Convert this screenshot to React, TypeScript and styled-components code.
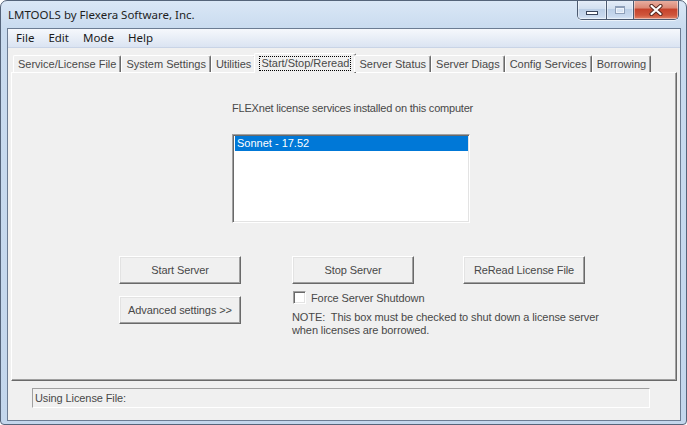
import React from 'react';
import styled, { createGlobalStyle } from 'styled-components';

const Global = createGlobalStyle`
  html, body { margin: 0; padding: 0; background: #ffffff; }
  body { font-family: "Liberation Sans", Arial, sans-serif; }
  * { box-sizing: border-box; }
`;

const TEXT = '#484848';

const Window = styled.div`
  width: 687px;
  height: 425px;
  border: 1px solid #55647a;
  border-radius: 7px 7px 4px 4px;
  background: linear-gradient(to bottom, #dae7f6 0px, #c9dbef 28px, #c3d6ec 100%);
  display: flex;
  flex-direction: column;
  padding: 0 5px 3px 6px;
  overflow: hidden;
`;

const TitleBar = styled.div`
  height: 27px;
  flex: none;
  display: flex;
  align-items: flex-start;
  justify-content: space-between;
`;

const TitleText = styled.div`
  margin: 6px 0 0 1px;
  font-family: "Noto Sans", "Open Sans", sans-serif;
  font-size: 11.5px;
  line-height: 16px;
  color: #1e1e1e;
`;

const CaptionGroup = styled.div`
  display: flex;
  margin: -1px 2px 0 0;
  height: 20px;
  border: 1px solid #4c5a70;
  border-top: none;
  border-radius: 0 0 5px 5px;
  overflow: hidden;
  box-shadow: 0 1px 0 rgba(255, 255, 255, 0.6);
`;

const CaptionButton = styled.div<{ $w: number; $close?: boolean }>`
  width: ${p => p.$w}px;
  height: 19px;
  display: flex;
  align-items: center;
  justify-content: center;
  border-left: ${p => (p.$close ? '1px solid #4c5a70' : 'none')};
  & + & { border-left: 1px solid #4c5a70; }
  background: ${p =>
    p.$close
      ? 'linear-gradient(to bottom, #eab3a6 0%, #dc8a77 40%, #c6432c 50%, #cf563c 80%, #e2866a 100%)'
      : 'linear-gradient(to bottom, #e6eef8 0%, #d3e0f0 45%, #bccfe6 50%, #c8d9ee 85%, #d9e6f5 100%)'};
  box-shadow: inset 0 0 0 1px rgba(255, 255, 255, 0.45);
`;

const MinGlyph = styled.div`
  width: 12px;
  height: 4px;
  margin-top: 6px;
  background: #ffffff;
  border: 1px solid #39445a;
`;

const MaxGlyph = styled.div`
  width: 10px;
  height: 8px;
  border: 1px solid #8e9fb8;
  border-top-width: 2px;
  background: #d8e4f3;
  box-shadow: inset 0 0 0 1px #eef3fa;
`;

const Client = styled.div`
  flex: 1;
  display: flex;
  flex-direction: column;
  border: 1px solid #6c7c93;
  background: #f0f0f0;
`;

const MenuBar = styled.div`
  height: 19px;
  flex: none;
  display: flex;
  align-items: center;
  padding-left: 1px;
  background: linear-gradient(to bottom, #f6f8fc 0%, #e8eef7 50%, #dbe4f2 100%);
  border-bottom: 1px solid #c9d4e6;
`;

const MenuItem = styled.div`
  padding: 0 7px;
  font-family: "Noto Sans", "Open Sans", sans-serif;
  font-size: 11.5px;
  line-height: 16px;
  color: #1a1a1a;
`;

const Body = styled.div`
  flex: 1;
  display: flex;
  flex-direction: column;
  padding: 4px 3px 0 3px;
`;

const TabStrip = styled.div`
  height: 20px;
  display: flex;
  align-items: flex-end;
  padding-left: 2px;
  position: relative;
  z-index: 1;
`;

const Tab = styled.div<{ $active?: boolean }>`
  height: ${p => (p.$active ? '20px' : '17px')};
  margin: ${p => (p.$active ? '0 -2px -1px -2px' : '0')};
  padding: ${p => (p.$active ? '3px 5px 0 5px' : '2px 4px 0 4px')};
  background: #f0f0f0;
  border-left: 1px solid #ffffff;
  border-top: 1px solid #ffffff;
  border-right: 1px solid #696969;
  border-radius: 2px 2px 0 0;
  box-shadow: inset -1px 0 0 #a0a0a0;
  font-size: 11px;
  line-height: 13px;
  color: ${TEXT};
  white-space: nowrap;
`;

const FocusLabel = styled.span`
  display: inline-block;
  outline: 1px dotted #000;
  outline-offset: 0px;
  padding: 0 1px;
`;

const Panel = styled.div`
  height: 309px;
  flex: none;
  display: flex;
  flex-direction: column;
  border-top: 1px solid #ffffff;
  border-left: 1px solid #ffffff;
  border-right: 1px solid #696969;
  border-bottom: 1px solid #696969;
  box-shadow: inset -1px -1px 0 #a0a0a0;
`;

const Caption = styled.div`
  margin: 29px 0 0 220px;
  font-size: 11px;
  line-height: 13px;
  letter-spacing: -0.2px;
  color: ${TEXT};
`;

const ListBox = styled.div`
  margin: 19px 0 0 220px;
  width: 238px;
  height: 89px;
  background: #ffffff;
  border-top: 1px solid #a0a0a0;
  border-left: 1px solid #a0a0a0;
  border-right: 1px solid #ffffff;
  border-bottom: 1px solid #ffffff;
  box-shadow: inset 1px 1px 0 #696969, inset -1px -1px 0 #e3e3e3;
  padding: 1px 1px 0 2px;
`;

const ListItem = styled.div<{ $selected?: boolean }>`
  height: 15px;
  padding-left: 2px;
  font-size: 11px;
  line-height: 15px;
  color: ${p => (p.$selected ? '#ffffff' : TEXT)};
  background: ${p => (p.$selected ? '#0078d7' : 'transparent')};
`;

const ControlGrid = styled.div`
  margin: 33px 0 0 107px;
  display: grid;
  grid-template-columns: 122px 122px 122px;
  column-gap: 50px;
  align-items: start;
`;

const Button = styled.div<{ $top?: number; $shift?: number }>`
  width: 122px;
  height: 28px;
  margin-top: ${p => p.$top ?? 0}px;
  margin-left: ${p => p.$shift ?? 0}px;
  display: flex;
  align-items: center;
  justify-content: center;
  background: #f0f0f0;
  border-top: 1px solid #ffffff;
  border-left: 1px solid #ffffff;
  border-right: 1px solid #696969;
  border-bottom: 1px solid #696969;
  box-shadow: inset -1px -1px 0 #a0a0a0, inset 1px 1px 0 #e3e3e3;
  font-size: 11px;
  letter-spacing: -0.1px;
  color: ${TEXT};
`;

const OptionBlock = styled.div`
  grid-column: 2 / span 2;
  margin: 7px 0 0 1px;
  display: flex;
  flex-direction: column;
`;

const CheckRow = styled.div`
  display: flex;
  align-items: center;
  gap: 5px;
  height: 13px;
  padding-left: 1px;
  font-size: 11px;
  letter-spacing: -0.1px;
  color: ${TEXT};
`;

const CheckBox = styled.div`
  width: 13px;
  height: 13px;
  background: #ffffff;
  border-top: 1px solid #a0a0a0;
  border-left: 1px solid #a0a0a0;
  border-right: 1px solid #ffffff;
  border-bottom: 1px solid #ffffff;
  box-shadow: inset 1px 1px 0 #696969, inset -1px -1px 0 #e3e3e3;
`;

const Note = styled.div`
  margin-top: 7px;
  font-size: 11px;
  line-height: 13px;
  letter-spacing: -0.1px;
  color: ${TEXT};
  white-space: pre;
`;

const StatusRow = styled.div`
  padding: 7px 27px 0 21px;
`;

const StatusField = styled.div`
  height: 20px;
  border-top: 1px solid #a0a0a0;
  border-left: 1px solid #a0a0a0;
  border-right: 1px solid #ffffff;
  border-bottom: 1px solid #ffffff;
  padding-left: 2px;
  font-size: 11px;
  line-height: 18px;
  letter-spacing: -0.1px;
  color: ${TEXT};
`;

const CloseIcon = () => (
  <svg width="14" height="12" viewBox="0 0 14 12">
    <path d="M2.5 2 L11.5 10 M11.5 2 L2.5 10" stroke="#5a2a22" strokeWidth="4.2" strokeLinecap="round" fill="none" />
    <path d="M2.5 2 L11.5 10 M11.5 2 L2.5 10" stroke="#ffffff" strokeWidth="2.2" strokeLinecap="round" fill="none" />
  </svg>
);

const tabs = [
  'Service/License File',
  'System Settings',
  'Utilities',
  'Start/Stop/Reread',
  'Server Status',
  'Server Diags',
  'Config Services',
  'Borrowing',
];

export default function App() {
  return (
    <>
      <Global />
      <Window>
        <TitleBar>
          <TitleText>LMTOOLS by Flexera Software, Inc.</TitleText>
          <CaptionGroup>
            <CaptionButton $w={28}>
              <MinGlyph />
            </CaptionButton>
            <CaptionButton $w={27}>
              <MaxGlyph />
            </CaptionButton>
            <CaptionButton $w={45} $close>
              <CloseIcon />
            </CaptionButton>
          </CaptionGroup>
        </TitleBar>
        <Client>
          <MenuBar>
            <MenuItem>File</MenuItem>
            <MenuItem>Edit</MenuItem>
            <MenuItem>Mode</MenuItem>
            <MenuItem>Help</MenuItem>
          </MenuBar>
          <Body>
            <TabStrip>
              {tabs.map(t =>
                t === 'Start/Stop/Reread' ? (
                  <Tab key={t} $active>
                    <FocusLabel>{t}</FocusLabel>
                  </Tab>
                ) : (
                  <Tab key={t}>{t}</Tab>
                )
              )}
            </TabStrip>
            <Panel>
              <Caption>FLEXnet license services installed on this computer</Caption>
              <ListBox>
                <ListItem $selected>Sonnet - 17.52</ListItem>
              </ListBox>
              <ControlGrid>
                <Button>Start Server</Button>
                <Button $shift={1}>Stop Server</Button>
                <Button>ReRead License File</Button>
                <Button $top={12}>Advanced settings &gt;&gt;</Button>
                <OptionBlock>
                  <CheckRow>
                    <CheckBox />
                    <span>Force Server Shutdown</span>
                  </CheckRow>
                  <Note>{'NOTE:  This box must be checked to shut down a license server\nwhen licenses are borrowed.'}</Note>
                </OptionBlock>
              </ControlGrid>
            </Panel>
            <StatusRow>
              <StatusField>Using License File:</StatusField>
            </StatusRow>
          </Body>
        </Client>
      </Window>
    </>
  );
}
